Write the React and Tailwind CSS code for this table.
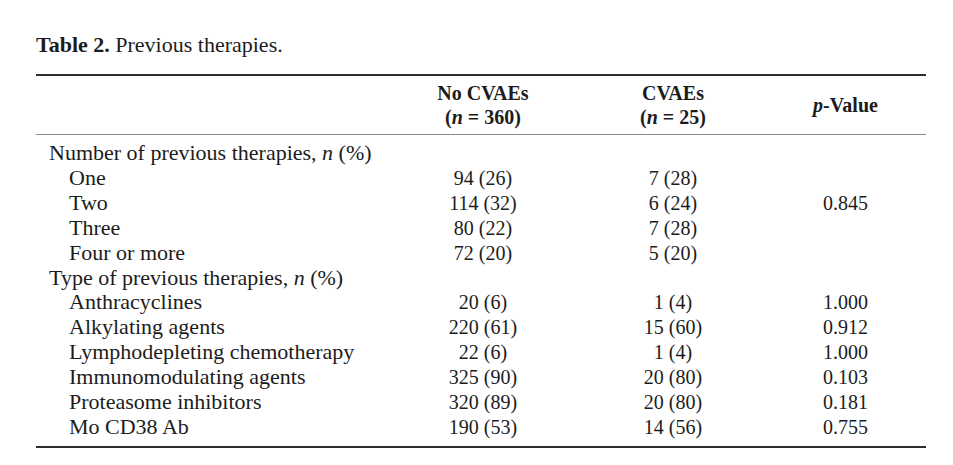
import React from "react";

const groups = [
  {
    title: "Number of previous therapies",
    rows: [
      { label: "One", a: "94 (26)", b: "7 (28)", p: "" },
      { label: "Two", a: "114 (32)", b: "6 (24)", p: "0.845" },
      { label: "Three", a: "80 (22)", b: "7 (28)", p: "" },
      { label: "Four or more", a: "72 (20)", b: "5 (20)", p: "" },
    ],
  },
  {
    title: "Type of previous therapies",
    rows: [
      { label: "Anthracyclines", a: "20 (6)", b: "1 (4)", p: "1.000" },
      { label: "Alkylating agents", a: "220 (61)", b: "15 (60)", p: "0.912" },
      { label: "Lymphodepleting chemotherapy", a: "22 (6)", b: "1 (4)", p: "1.000" },
      { label: "Immunomodulating agents", a: "325 (90)", b: "20 (80)", p: "0.103" },
      { label: "Proteasome inhibitors", a: "320 (89)", b: "20 (80)", p: "0.181" },
      { label: "Mo CD38 Ab", a: "190 (53)", b: "14 (56)", p: "0.755" },
    ],
  },
];

const cols = "grid grid-cols-[357px_180px_200px_1fr]";

export default function App() {
  return (
    <div className="min-h-[465px] w-[953px] bg-white pl-[36px] pr-[27px] pt-[31px] font-['Liberation_Serif',serif] text-[#1c1c1c]">
      <p className="text-[22px] leading-[28px]">
        <span className="font-bold">Table 2.</span> Previous therapies.
      </p>

      <div className="mt-[15px] border-t-2 border-b-2 border-[#2e2e2e]">
        {/* header */}
        <div className={`${cols} items-center border-b border-[#8a8a8a] py-[5px] text-[20px] font-bold leading-[24px]`}>
          <div />
          <div className="text-center">
            No CVAEs
            <br />
            (<i>n</i> = 360)
          </div>
          <div className="text-center">
            CVAEs
            <br />
            (<i>n</i> = 25)
          </div>
          <div className="pr-[8px] text-center">
            <i>p</i>-Value
          </div>
        </div>

        {/* body */}
        <div className="pt-[6px] pb-[6px] leading-[24.9px]">
          {groups.map((g) => (
            <React.Fragment key={g.title}>
              <div className={cols}>
                <div className="pl-[13px] text-[22px]">
                  {g.title}, <i>n</i> (%)
                </div>
              </div>
              {g.rows.map((r) => (
                <div key={r.label} className={`${cols} text-[20px]`}>
                  <div className="pl-[33px] text-[22px]">{r.label}</div>
                  <div className="text-center">{r.a}</div>
                  <div className="text-center">{r.b}</div>
                  <div className="pr-[8px] text-center">{r.p}</div>
                </div>
              ))}
            </React.Fragment>
          ))}
        </div>
      </div>
    </div>
  );
}
